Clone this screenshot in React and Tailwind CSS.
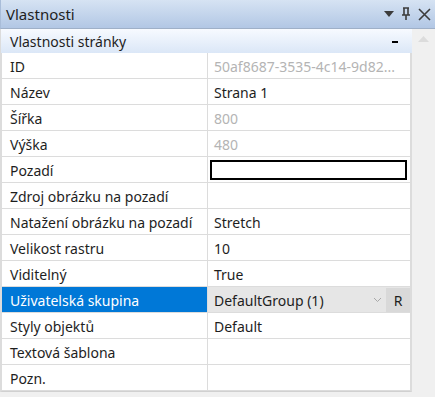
import React from 'react';

const rows = [
    { label: 'ID', value: '50af8687-3535-4c14-9d82...', muted: true },
    { label: 'Název', value: 'Strana 1' },
    { label: 'Šířka', value: '800', muted: true },
    { label: 'Výška', value: '480', muted: true },
    { label: 'Pozadí', kind: 'color' },
    { label: 'Zdroj obrázku na pozadí', value: '' },
    { label: 'Natažení obrázku na pozadí', value: 'Stretch' },
    { label: 'Velikost rastru', value: '10' },
    { label: 'Viditelný', value: 'True' },
    { label: 'Uživatelská skupina', value: 'DefaultGroup (1)', kind: 'combo' },
    { label: 'Styly objektů', value: 'Default' },
    { label: 'Textová šablona', value: '' },
    { label: 'Pozn.', value: '' },
];

const Row = ({ row }) => {
    const selected = row.kind === 'combo';
    return (
        <div className="flex h-[26px] border-b border-[#dcdcdc]">
            <div className={`w-[206px] shrink-0 border-r border-[#dcdcdc] pl-[8px] pt-[1px] flex items-center ${selected ? 'bg-[#0078d7] text-white' : 'text-[#1e1e1e]'}`}>
                {row.label}
            </div>
            {row.kind === 'color' && (
                <div className="flex-1 flex items-center pl-[2px] pr-[3px]">
                    <div className="h-[20px] w-full border-2 border-black bg-white" />
                </div>
            )}
            {row.kind === 'combo' && (
                <div className="flex-1 flex bg-[#e6e6e6] pt-[1px]">
                    <div className="flex-1 flex items-center pl-[6px] text-[#1e1e1e]">{row.value}</div>
                    <div className="w-[18px] flex items-center justify-center">
                        <svg width="9" height="6" viewBox="0 0 9 6">
                            <path d="M1 1 L4.5 4.5 L8 1" fill="none" stroke="#a8a8a8" strokeWidth="1" />
                        </svg>
                    </div>
                    <div className="w-[24px] flex items-center justify-center bg-[#d9d9d9] text-[#1e1e1e]">R</div>
                </div>
            )}
            {!row.kind && (
                <div className={`flex-1 flex items-center pl-[6px] pt-[1px] overflow-hidden whitespace-nowrap ${row.muted ? 'text-[#b4b4b4]' : 'text-[#1e1e1e]'}`}>
                    {row.value}
                </div>
            )}
        </div>
    );
};

export default function App() {
    return (
        <div className="w-[435px] h-[397px] flex flex-col bg-[#f0f0f0] overflow-hidden text-[14px]" style={{ fontFamily: '"Noto Sans", "Open Sans", sans-serif' }}>
            {/* panel title */}
            <div className="h-[29px] shrink-0 flex items-center pl-[5px] pr-[4px] bg-gradient-to-b from-[#d6e3f3] to-[#b2c7e5] border-b border-[#9fb0c8] border-l border-l-[#a9bdd9]">
                <span className="flex-1 text-[15px] text-[#1e1e1e]">Vlastnosti</span>
                <div className="flex items-center gap-[7px] text-[#3c3c3c]">
                    <svg width="10" height="6" viewBox="0 0 10 6"><path d="M0 0 H10 L5 6 Z" fill="#3c3c3c" /></svg>
                    <svg width="10" height="14" viewBox="0 0 10 14">
                        <path d="M2 1 H8 M3 1 V8 M7 1 V8 M1 8 H9 M5 8 V13" fill="none" stroke="#3c3c3c" strokeWidth="1.6" />
                    </svg>
                    <svg width="13" height="13" viewBox="0 0 13 13">
                        <path d="M1 1 L12 12 M12 1 L1 12" fill="none" stroke="#3c3c3c" strokeWidth="1.6" />
                    </svg>
                </div>
            </div>

            <div className="flex flex-1 min-h-0">
                {/* property grid */}
                <div className="w-[412px] shrink-0 flex flex-col">
                    <div className="h-[24px] shrink-0 flex items-center pl-[9px] pr-[14px] pt-[1px] bg-gradient-to-b from-[#f7faff] to-[#dbe7f7] text-[#1e1e1e] border-l border-[#dcdcdc]">
                        <span className="flex-1">Vlastnosti stránky</span>
                        <span className="w-[6px] h-[2px] bg-black" />
                    </div>
                    <div className="bg-white border-l-2 border-r-2 border-[#dcdcdc] border-b border-b-[#d0d0d0]">
                        {rows.map((row) => (
                            <Row key={row.label} row={row} />
                        ))}
                    </div>
                </div>
                {/* scrollbar */}
                <div className="flex-1 flex justify-center pt-[7px]">
                    <svg width="11" height="6" viewBox="0 0 11 6"><path d="M0 6 L5.5 0 L11 6 Z" fill="#dcdcdc" /></svg>
                </div>
            </div>
        </div>
    );
}
